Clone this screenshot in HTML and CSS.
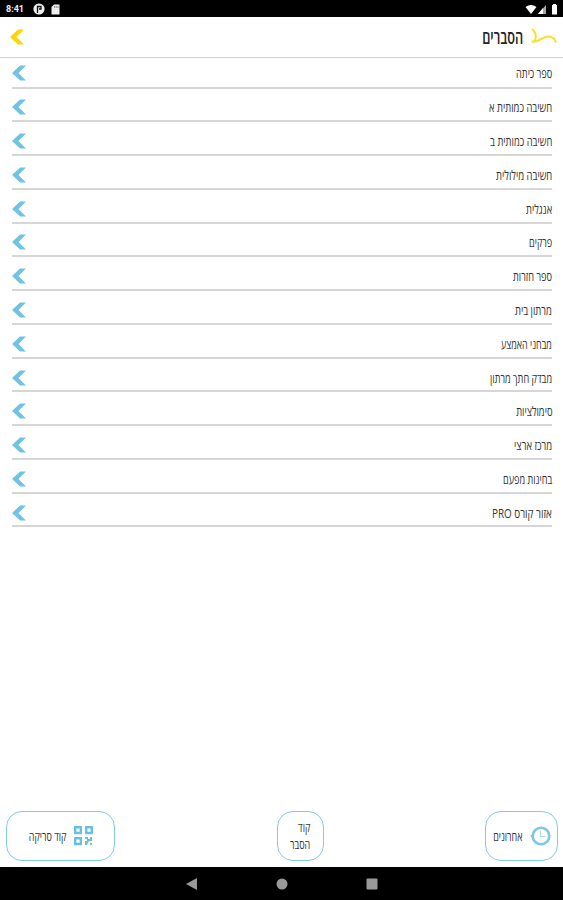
FILE: index.html
```html
<!DOCTYPE html>
<html lang="he" dir="rtl">
<head>
  <meta charset="UTF-8">
  <title>הסברים</title>
  <meta name="viewport" content="width=device-width, initial-scale=1">
  <link rel="stylesheet" href="styles.css">
</head>
<body>
  <div class="status" dir="ltr">
    <span class="time">8:41</span>
    <svg class="status-app" width="12" height="12" viewBox="0 0 12 12"><circle cx="6" cy="6" r="5.6" fill="#eee"/><path d="M4.500 10V3.500H8V6H6" fill="none" stroke="#111" stroke-width="1.3"/></svg>
    <svg class="status-card" width="9" height="11" viewBox="0 0 9 11"><path d="M3 .5h5.5v10H.5V3z" fill="#eee"/><path d="M3.5 2v2M5.2 2v2M7 2v2" stroke="#777" stroke-width=".8"/></svg>
    <svg class="status-signal" width="33" height="11" viewBox="0 0 33 11"><path d="M.5 3Q6 -1 11.500 3L6 10z" fill="#fff"/><path d="M21 1v9h-8z" fill="#aaa"/><path d="M18 4v6h-5z" fill="#fff"/><path d="M27 1h1V0h3v1h1v9.500h-5z" fill="#fff"/></svg>
  </div>

  <div class="header">
    <svg class="logo" width="28" height="18" viewBox="0 0 28 18"><path d="M2 1C5 3 7.500 8.500 4.500 13.500C11 13 13 8.500 18 8.500C22.500 8.500 25 10.500 26 14.500M1.500 13.500H5" fill="none" stroke="#fadf25" stroke-width="2"/></svg>
    <h1>הסברים</h1>
    <svg class="arrow back" viewBox="0 0 14 16"><path d="M0 8L8 0.500h6L6.500 8L14 15.500H8z"/></svg>
  </div>

  <div class="list" id="list"></div>

  <div class="actions">
    <div class="btn recent">
      <svg width="22" height="20" viewBox="0 0 22 20"><circle cx="12" cy="10" r="8.300" fill="none" stroke="#7ac7e6" stroke-width="2.600"/><path d="M1 9h4l-2 3z" fill="#7ac7e6"/><path d="M11.500 5v5.500h5" fill="none" stroke="#a8d9ec" stroke-width="1.200"/></svg>
      <span class="narrow">אחרונים</span>
    </div>
    <div class="btn code">
      <span class="narrow">קוד<br>הסבר</span>
    </div>
    <div class="btn scan">
      <svg width="19" height="20" viewBox="0 0 19 20"><path d="M1.200 1.200h5.600v5.800H1.200zM12.200 1.200h5.600v5.800h-5.600zM1.200 12.200h5.600V18H1.200z" fill="none" stroke="#68bfe2" stroke-width="2.400"/><path d="M11 11h3v2h2v-2h2v4h-3l-2 4h-2v-4h2v-2h-2zM16 17h2v2h-2z" fill="#68bfe2"/></svg>
      <span class="narrow">קוד סריקה</span>
    </div>
  </div>

  <div class="nav" dir="ltr">
    <svg width="12" height="12" viewBox="0 0 12 12"><path d="M0 6L11 0v12z"/></svg>
    <svg width="12" height="12" viewBox="0 0 12 12"><circle cx="6" cy="6" r="5.500"/></svg>
    <svg width="12" height="12" viewBox="0 0 12 12"><rect x=".5" y=".5" width="11" height="11" rx="1"/></svg>
  </div>

  <script>
    // title and label width
    const items = [
      ['ספר כיתה', 36],
      ['חשיבה כמותית א', 63],
      ['חשיבה כמותית ב', 62],
      ['חשיבה מילולית', 56],
      ['אנגלית', 26],
      ['פרקים', 23],
      ['ספר חזרות', 39],
      ['מרתון בית', 37],
      ['מבחני האמצע', 51],
      ['מבדק חתך מרתון', 62],
      ['סימולציות', 36],
      ['מרכז ארצי', 38],
      ['בחינות מפעם', 49],
      ['אזור קורס PRO', 60]
    ];

    const list = document.getElementById('list');
    items.forEach(([title, width]) => {
      const row = document.createElement('div');
      row.className = 'row';
      row.innerHTML = `<span class="label">${title}</span>
        <svg class="arrow" viewBox="0 0 14 16"><path d="M0 8L8 0.500h6L6.500 8L14 15.500H8z"/></svg>`;
      list.appendChild(row);
      const label = row.firstChild;
      label.style.transform = `scaleX(${width / label.offsetWidth})`;
    });
  </script>
</body>
</html>
```

FILE: styles.css
```css
* {
  box-sizing: border-box;
}
body {
  margin: 0;
  height: 900px;
  display: flex;
  flex-direction: column;
  overflow: hidden;
  background: #fff;
  color: #333;
  font-family: "Open Sans", "DejaVu Sans", sans-serif;
}
svg {
  flex: none;
}
.status {
  height: 17px;
  padding: 1px 5px 0 6px;
  display: flex;
  align-items: center;
  background: #000;
  color: #eee;
}
.time {
  width: 27px;
  font: bold 9px Roboto, sans-serif;
}
.status-card {
  margin-left: 6px;
}
.status-signal {
  margin-left: auto;
}
.header {
  height: 41px;
  padding: 0 5px 0 10px;
  display: flex;
  align-items: center;
  border-bottom: 1px solid #d0d0d0;
}
h1 {
  margin: 0 7px 0 0;
  font-size: 19px;
  font-weight: 600;
  line-height: 24px;
  color: #222;
  transform: scaleX(.67);
  transform-origin: right;
}
.arrow {
  width: 14px;
  height: 16px;
  margin-right: auto;
  fill: #72c3e3;
}
.back {
  fill: #fcd50b;
}
.list {
  padding: 0 11px 0 12px;
}
.row {
  height: 33.77px;
  padding-top: 6px;
  display: flex;
  align-items: center;
  border-bottom: 2px solid #d6d6d6;
}
.row:first-child {
  height: 30.500px;
  padding-top: 2px;
}
.label {
  font-size: 13px;
  font-weight: 500;
  line-height: 20px;
  white-space: nowrap;
  transform-origin: right;
}
.actions {
  margin-top: auto;
  height: 56px;
  padding: 0 5px 6px 6px;
  display: flex;
}
.btn {
  height: 50px;
  display: flex;
  align-items: center;
  border: 1.500px solid #80cbea;
  border-radius: 16px;
  font-size: 13px;
  font-weight: 500;
  line-height: 17px;
  white-space: nowrap;
}
.narrow {
  transform: scaleX(.69);
  transform-origin: right;
}
.recent {
  width: 73px;
  padding-right: 6px;
  gap: 7px;
}
.code {
  width: 47px;
  margin-right: 161px;
  padding-right: 13px;
}
.scan {
  width: 109px;
  margin-right: auto;
  padding-right: 21px;
  gap: 8px;
}
.nav {
  height: 33px;
  display: flex;
  justify-content: center;
  align-items: center;
  gap: 78px;
  background: #000;
  fill: #999;
}
```
